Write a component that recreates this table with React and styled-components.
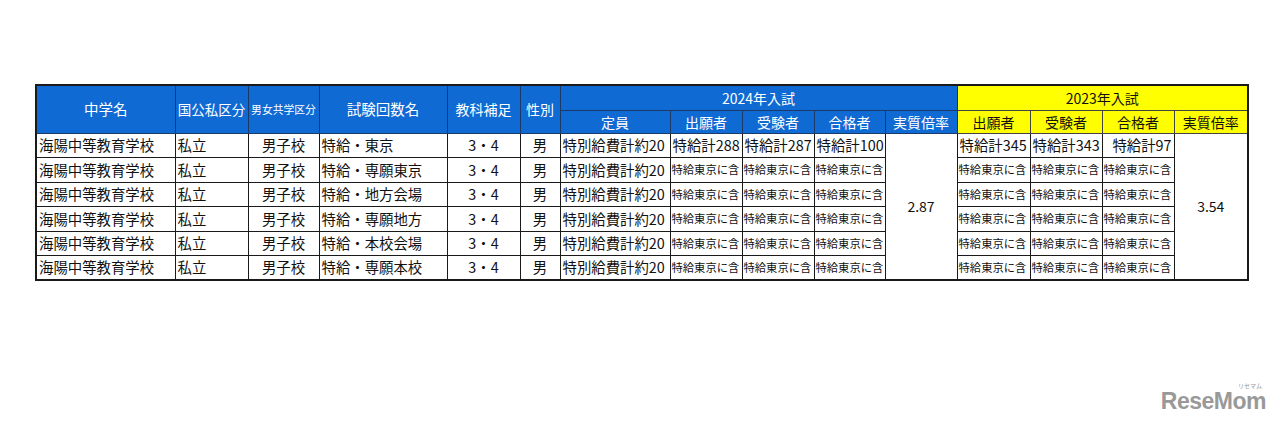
import styled, { createGlobalStyle } from 'styled-components';

const GlobalStyle = createGlobalStyle`
    body {
        margin: 0;
        background: #fff;
        font-family: "Noto Sans CJK JP", "Noto Sans", sans-serif;
    }
`;

const Page = styled.div`
    position: relative;
    width: 1280px;
    height: 426px;
    padding: 84px 0 0 35px;
    box-sizing: border-box;
    overflow: hidden;
`;

const Table = styled.table`
    border-collapse: collapse;
    table-layout: fixed;
    width: 1212px;
    border: 2px solid #1a1a1a;
`;

const HeadCell = styled.th`
    background: ${(props) => (props.yellow ? '#ffff00' : '#0f6ad4')};
    color: ${(props) => (props.yellow ? '#111' : '#fff')};
    border: 1px solid ${(props) => (props.yellow ? '#444' : '#1b3a66')};
    font-weight: normal;
    font-size: ${(props) => props.size || 14}px;
    line-height: 1;
    padding: 0;
    text-align: center;
    white-space: nowrap;
    overflow: hidden;
`;

const HeadRow = styled.tr`
    height: ${(props) => props.h}px;
`;

const Row = styled.tr`
    height: 24.5px;
`;

const Cell = styled.td`
    border: 1px solid #1a1a1a;
    color: #111;
    font-size: ${(props) => (props.small ? 11.3 : 14.4)}px;
    line-height: 1;
    padding: ${(props) => (props.small ? '0 1px' : '0 2px')};
    text-align: ${(props) => props.align || 'left'};
    white-space: nowrap;
    overflow: hidden;
`;

const RateCell = styled.td`
    border: 1px solid #1a1a1a;
    color: #111;
    font-size: 14px;
    text-align: center;
    vertical-align: middle;
    padding: 0;
`;

const Logo = styled.div`
    position: absolute;
    right: 14px;
    bottom: 13px;
    font-family: "Liberation Sans", "Noto Sans", sans-serif;
    font-weight: bold;
    font-size: 23px;
    letter-spacing: -0.5px;
    color: #999;
    line-height: 1;
`;

const LogoKana = styled.span`
    position: absolute;
    right: 4px;
    top: -7px;
    font-family: "Noto Sans CJK JP", sans-serif;
    font-size: 6px;
    font-weight: normal;
    letter-spacing: 0;
`;

const widths = [139, 73, 71, 128, 73, 40, 110, 72, 72, 71, 72, 73, 72, 72, 74];

const rounds = ['特給・東京', '特給・専願東京', '特給・地方会場', '特給・専願地方', '特給・本校会場', '特給・専願本校'];
const inc = '特給東京に含';

function App() {
    return (
        <Page>
            <GlobalStyle />
            <Table>
                <colgroup>
                    {widths.map((w, i) => (
                        <col key={i} style={{ width: w }} />
                    ))}
                </colgroup>
                <thead>
                    <HeadRow h={25}>
                        <HeadCell rowSpan={2} size={14.5}>中学名</HeadCell>
                        <HeadCell rowSpan={2} size={13.5}>国公私区分</HeadCell>
                        <HeadCell rowSpan={2} size={10.8}>男女共学区分</HeadCell>
                        <HeadCell rowSpan={2} size={14.5}>試験回数名</HeadCell>
                        <HeadCell rowSpan={2} size={14}>教科補足</HeadCell>
                        <HeadCell rowSpan={2} size={14}>性別</HeadCell>
                        <HeadCell colSpan={5}>2024年入試</HeadCell>
                        <HeadCell colSpan={4} yellow>2023年入試</HeadCell>
                    </HeadRow>
                    <HeadRow h={23}>
                        <HeadCell>定員</HeadCell>
                        <HeadCell>出願者</HeadCell>
                        <HeadCell>受験者</HeadCell>
                        <HeadCell>合格者</HeadCell>
                        <HeadCell>実質倍率</HeadCell>
                        <HeadCell yellow>出願者</HeadCell>
                        <HeadCell yellow>受験者</HeadCell>
                        <HeadCell yellow>合格者</HeadCell>
                        <HeadCell yellow>実質倍率</HeadCell>
                    </HeadRow>
                </thead>
                <tbody>
                    {rounds.map((name, i) => (
                        <Row key={name}>
                            <Cell>海陽中等教育学校</Cell>
                            <Cell>私立</Cell>
                            <Cell align="center">男子校</Cell>
                            <Cell>{name}</Cell>
                            <Cell align="center">3・4</Cell>
                            <Cell align="center">男</Cell>
                            <Cell>特別給費計約20</Cell>
                            {i === 0 ? (
                                <>
                                    <Cell>特給計288</Cell>
                                    <Cell>特給計287</Cell>
                                    <Cell>特給計100</Cell>
                                    <RateCell rowSpan={6}>2.87</RateCell>
                                    <Cell>特給計345</Cell>
                                    <Cell>特給計343</Cell>
                                    <Cell align="right">特給計97</Cell>
                                    <RateCell rowSpan={6}>3.54</RateCell>
                                </>
                            ) : (
                                <>
                                    <Cell small>{inc}</Cell>
                                    <Cell small>{inc}</Cell>
                                    <Cell small>{inc}</Cell>
                                    <Cell small>{inc}</Cell>
                                    <Cell small>{inc}</Cell>
                                    <Cell small>{inc}</Cell>
                                </>
                            )}
                        </Row>
                    ))}
                </tbody>
            </Table>
            <Logo>
                ReseMom
                <LogoKana>リセマム</LogoKana>
            </Logo>
        </Page>
    );
}

export default App;
